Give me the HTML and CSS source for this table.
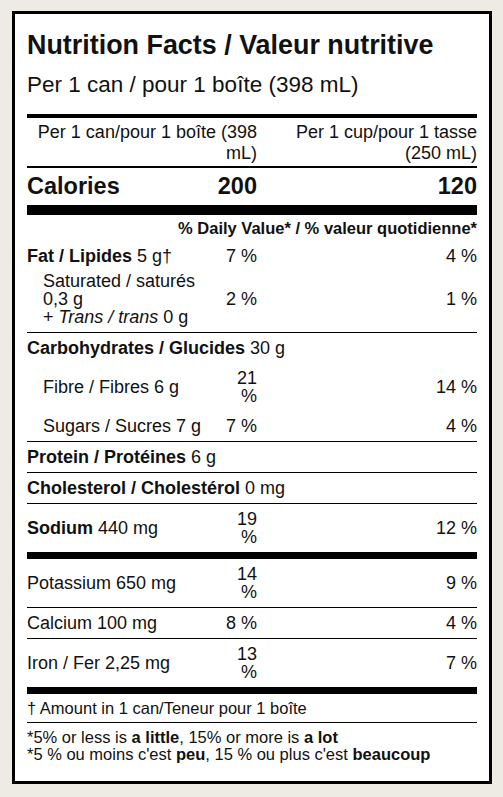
FILE: index.html
```html
<!DOCTYPE html>
<html lang="en">
<head>
    <meta charset="UTF-8">
    <meta name="viewport" content="width=device-width, initial-scale=1.0">
    <title>Nutrition Facts / Valeur nutritive</title>
    <link rel="stylesheet" href="styles.css">
</head>
<body>

<div class="label">
    <h1 class="title">Nutrition Facts / Valeur nutritive</h1>
    <p class="serving">Per 1 can / pour 1 boîte (398 mL)</p>

    <div class="row head">
        <div class="span2">Per 1 can/pour 1 boîte (398 mL)</div>
        <div class="col3">Per 1 cup/pour 1 tasse (250 mL)</div>
    </div>

    <div class="row calories">
        <div class="cal"><span>Calories</span><span>200</span></div>
        <div class="num">120</div>
    </div>

    <div class="row dv">
        <div class="full">% Daily Value* / % valeur quotidienne*</div>
    </div>

    <!-- Fat -->
    <div class="row fat">
        <div><b>Fat / Lipides</b> 5&nbsp;g†</div>
        <div class="num">7 %</div>
        <div class="num">4 %</div>
    </div>
    <div class="row sat line">
        <div class="indent">Saturated / saturés 0,3&nbsp;g<br>+ <i>Trans / trans</i> 0&nbsp;g</div>
        <div class="num">2 %</div>
        <div class="num">1 %</div>
    </div>

    <!-- Carbohydrates -->
    <div class="row">
        <div class="full"><b>Carbohydrates / Glucides</b> 30&nbsp;g</div>
    </div>
    <div class="row">
        <div class="indent">Fibre / Fibres 6&nbsp;g</div>
        <div class="num">21 %</div>
        <div class="num">14 %</div>
    </div>
    <div class="row line">
        <div class="indent">Sugars / Sucres 7&nbsp;g</div>
        <div class="num">7 %</div>
        <div class="num">4 %</div>
    </div>

    <div class="row line">
        <div class="full"><b>Protein / Protéines</b> 6&nbsp;g</div>
    </div>
    <div class="row line">
        <div class="full"><b>Cholesterol / Cholestérol</b> 0&nbsp;mg</div>
    </div>
    <div class="row thick">
        <div><b>Sodium</b> 440&nbsp;mg</div>
        <div class="num">19 %</div>
        <div class="num">12 %</div>
    </div>

    <!-- Minerals -->
    <div class="row line">
        <div>Potassium 650&nbsp;mg</div>
        <div class="num">14 %</div>
        <div class="num">9 %</div>
    </div>
    <div class="row line">
        <div>Calcium 100&nbsp;mg</div>
        <div class="num">8 %</div>
        <div class="num">4 %</div>
    </div>
    <div class="row thick">
        <div>Iron / Fer 2,25&nbsp;mg</div>
        <div class="num">13 %</div>
        <div class="num">7 %</div>
    </div>

    <div class="note line">† Amount in 1 can/Teneur pour 1 boîte</div>
    <div class="note last">
        *5% or less is <b>a little</b>, 15% or more is <b>a lot</b><br>
        *5 % ou moins c'est <b>peu</b>, 15 % ou plus c'est <b>beaucoup</b>
    </div>
</div>

</body>
</html>
```

FILE: styles.css
```css
body {
    font-family: "Liberation Sans", Arial, sans-serif;
    margin: 0;
    padding: 0;
    background-color: #eeebe4;
    color: #111;
}
.label {
    width: 480px;
    box-sizing: border-box;
    margin: 11px 0 0 12px;
    border: 3px solid #000;
    background-color: #fff;
    padding: 16px 12px 11px;
}
.title {
    margin: 0;
    font-size: 26.9px;
    line-height: 30px;
    font-weight: bold;
}
.serving {
    margin: 12px 0 0;
    font-size: 22.5px;
    line-height: 25px;
}
/* Table rows: name / % per can / % per cup */
.row {
    display: grid;
    grid-template-columns: 195px 35px 220px;
    align-items: center;
    font-size: 18px;
    line-height: 18px;
    padding: 6px 0;
}
.num {
    text-align: right;
}
.full {
    grid-column: 1 / -1;
}
.indent {
    padding-left: 16px;
}
.line {
    border-bottom: 1px solid #000;
}
.thick {
    border-bottom: 7px solid #000;
}
.head {
    margin-top: 17px;
    border-top: 4px solid #000;
    border-bottom: 2px solid #000;
    padding: 4px 0 2px;
    line-height: 21px;
}
.head .span2 {
    grid-column: 1 / 3;
    text-align: right;
}
.head .col3 {
    text-align: right;
    padding-left: 20px;
}
.calories {
    padding: 5px 0;
    font-size: 23.5px;
    line-height: 27px;
    font-weight: bold;
    border-bottom: 10px solid #000;
}
.cal {
    grid-column: 1 / 3;
    display: flex;
    justify-content: space-between;
}
.dv {
    padding: 4px 0;
    font-size: 16.5px;
    font-weight: bold;
}
.dv .full {
    text-align: right;
}
.fat {
    padding: 6px 0 3px;
}
.sat {
    padding-top: 4px;
}
.note {
    font-size: 16.5px;
    line-height: 17px;
    padding: 6px 0 5px;
}
.note.last {
    padding: 6px 0 7px;
}
```
